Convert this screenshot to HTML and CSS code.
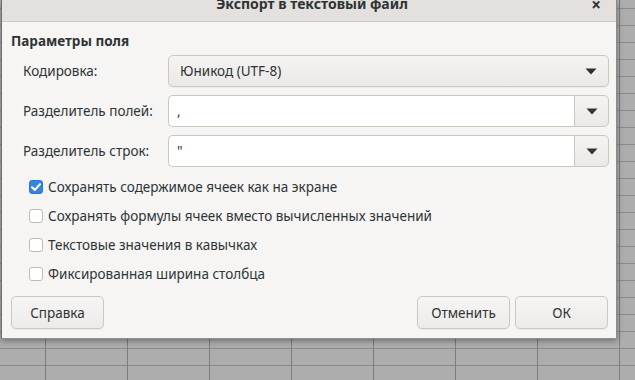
FILE: index.html
```html
<!DOCTYPE html>
<html lang="ru">
<head>
<meta charset="utf-8">
<title>Экспорт в текстовый файл</title>
<link rel="stylesheet" href="styles.css">
</head>
<body>
<div class="desk">
  <div class="dialog">
    <div class="titlebar">
      <span class="title">Экспорт в текстовый файл</span>
      <span class="close">×</span>
    </div>
    <div class="content">
      <div class="section">Параметры поля</div>
      <div class="form">
        <div class="label">Кодировка:</div>
        <div class="combo">
          <span class="combo-text">Юникод (UTF-8)</span>
          <svg class="arrow" width="12" height="7" viewBox="0 0 12 7"><path d="M0.5 0.5H11.5L6 6.5Z" fill="#2e3436"/></svg>
        </div>
        <div class="label">Разделитель полей:</div>
        <div class="entry-combo">
          <span class="entry">,</span>
          <span class="entry-btn"><svg width="12" height="7" viewBox="0 0 12 7"><path d="M0.5 0.5H11.5L6 6.5Z" fill="#2e3436"/></svg></span>
        </div>
        <div class="label">Разделитель строк:</div>
        <div class="entry-combo">
          <span class="entry">"</span>
          <span class="entry-btn"><svg width="12" height="7" viewBox="0 0 12 7"><path d="M0.5 0.5H11.5L6 6.5Z" fill="#2e3436"/></svg></span>
        </div>
      </div>
      <div class="checks">
        <label class="check"><span class="box on"><svg width="10" height="8" viewBox="0 0 10 8"><path d="M1 4.2L3.8 7L9 1.2" fill="none" stroke="#fff" stroke-width="2" stroke-linecap="round" stroke-linejoin="round"/></svg></span>Сохранять содержимое ячеек как на экране</label>
        <label class="check"><span class="box"></span>Сохранять формулы ячеек вместо вычисленных значений</label>
        <label class="check"><span class="box"></span>Текстовые значения в кавычках</label>
        <label class="check"><span class="box"></span>Фиксированная ширина столбца</label>
      </div>
      <div class="buttons">
        <button class="btn">Справка</button>
        <span class="spacer"></span>
        <button class="btn">Отменить</button>
        <button class="btn">ОК</button>
      </div>
    </div>
  </div>
</div>
</body>
</html>
```
FILE: styles.css
```css
html, body {
  margin: 0;
  padding: 0;
}
body {
  width: 635px;
  height: 380px;
  overflow: hidden;
  font-family: "Noto Sans", "DejaVu Sans", sans-serif;
  font-size: 13.5px;
  color: #2e3436;
  background-color: #adadad;
  background-image:
    linear-gradient(to right, #7d7d7d 1px, transparent 1px),
    linear-gradient(to bottom, #8a8a8a 1px, transparent 1px);
  background-size: 82px 17px, 82px 17px;
  background-position: 45px 8px, 45px 8px;
}
.desk {
  padding-left: 1px;
}
.dialog {
  width: 616px;
  height: 339px;
  background: #f6f5f4;
  border-left: 1px solid #6e6e6e;
  border-right: 1px solid #8a8a8a;
  border-bottom: 1px solid #8f8f8f;
  box-shadow: 0 2px 6px rgba(0, 0, 0, 0.35);
  box-sizing: border-box;
  display: flex;
  flex-direction: column;
}
.titlebar {
  height: 22px;
  background: #e3e0dd;
  border-bottom: 1px solid #cdc9c5;
  box-sizing: border-box;
  position: relative;
  overflow: hidden;
  display: flex;
  justify-content: center;
}
.title {
  font-weight: bold;
  font-size: 14px;
  line-height: 14px;
  margin-top: -3px;
  margin-left: 6px;
  color: #2e3436;
}
.close {
  position: absolute;
  right: 15px;
  top: -7px;
  font-size: 17px;
  font-weight: bold;
  color: #2e3436;
}
.content {
  padding: 10px 8px 0 9px;
  display: flex;
  flex-direction: column;
}
.section {
  font-weight: bold;
  font-size: 13.5px;
  line-height: 18px;
}
.form {
  display: grid;
  grid-template-columns: 157px 441px;
  row-gap: 8px;
  margin-top: 5px;
  align-items: center;
}
.label {
  padding-left: 12px;
}
.combo {
  height: 32px;
  box-sizing: border-box;
  border: 1px solid #cdc7c2;
  border-radius: 5px;
  background: linear-gradient(#f4f3f2, #ebe9e7);
  box-shadow: 0 1px 0 rgba(0,0,0,0.04);
  display: flex;
  align-items: center;
  padding: 0 11px 0 11px;
}
.combo-text {
  flex: 1;
}
.entry-combo {
  height: 32px;
  display: flex;
}
.entry {
  flex: 1;
  background: #fff;
  border: 1px solid #cdc7c2;
  border-right: none;
  border-radius: 5px 0 0 5px;
  padding-left: 8px;
  line-height: 30px;
}
.entry-btn {
  width: 35px;
  box-sizing: border-box;
  border: 1px solid #cdc7c2;
  border-radius: 0 5px 5px 0;
  background: linear-gradient(#f4f3f2, #ebe9e7);
  display: flex;
  align-items: center;
  justify-content: center;
}
.checks {
  display: flex;
  flex-direction: column;
  margin-top: 11px;
  padding-left: 18px;
  gap: 11px;
}
.check {
  display: flex;
  align-items: center;
  gap: 5px;
  line-height: 18px;
}
.box {
  width: 14px;
  height: 14px;
  box-sizing: border-box;
  border: 1px solid #c0bab5;
  border-radius: 3px;
  background: #fff;
  display: flex;
  align-items: center;
  justify-content: center;
}
.box.on {
  background: #3584e4;
  border-color: #2a76d6;
}
.buttons {
  display: flex;
  gap: 5px;
  margin-top: 13px;
}
.spacer {
  flex: 1;
}
.btn {
  width: 93px;
  height: 33px;
  font-family: inherit;
  font-size: 13.5px;
  color: #2e3436;
  border: 1px solid #cdc7c2;
  border-radius: 5px;
  background: linear-gradient(#f6f5f4, #edebe9);
  box-shadow: 0 1px 1px rgba(0,0,0,0.06);
  padding: 0;
}
```
